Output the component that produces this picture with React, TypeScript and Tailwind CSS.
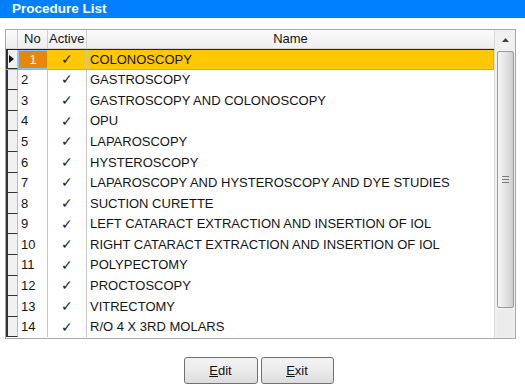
import React from "react";

const procedures = [
  "COLONOSCOPY",
  "GASTROSCOPY",
  "GASTROSCOPY AND COLONOSCOPY",
  "OPU",
  "LAPAROSCOPY",
  "HYSTEROSCOPY",
  "LAPAROSCOPY AND HYSTEROSCOPY AND DYE STUDIES",
  "SUCTION CURETTE",
  "LEFT CATARACT EXTRACTION AND INSERTION OF IOL",
  "RIGHT CATARACT EXTRACTION AND INSERTION OF IOL",
  "POLYPECTOMY",
  "PROCTOSCOPY",
  "VITRECTOMY",
  "R/O 4 X 3RD MOLARS",
];

const Row = ({ no, name, selected }: { no: number; name: string; selected: boolean }) => (
  <div
    className={
      "flex h-[20.6px] " +
      (selected ? "bg-[#ffc800] border-t border-t-[#222] border-b border-b-[#7ab8f0]" : "")
    }
  >
    <div className="w-[12px] shrink-0 bg-[#f0f0f0] border-l-2 border-l-[#333] border-b border-b-[#333] border-r border-r-[#bdbdbd] flex items-center">
      {selected && (
        <svg width="5" height="8" viewBox="0 0 5 8" className="ml-[1px]">
          <path d="M0 0 L5 4 L0 8 Z" fill="#111" />
        </svg>
      )}
    </div>
    <div
      className={
        "w-[30px] shrink-0 flex items-center border-r border-r-[#c8c8c8] " +
        (selected ? "bg-[#e6860a] text-white border border-[#8cc4f5] justify-center" : "pl-[3px]")
      }
    >
      {no}
    </div>
    <div className="w-[39px] shrink-0 flex items-center justify-center border-r border-r-[#c8c8c8] text-[14px] text-[#222]">
      ✓
    </div>
    <div className={"flex-1 flex items-center pl-[3px] " + (selected ? "border-r border-r-[#7ab8f0]" : "")}>
      {name}
    </div>
  </div>
);

export default function App() {
  return (
    <div
      className="w-[525px] h-[389px] bg-white overflow-hidden text-[13px] text-[#141414]"
      style={{ fontFamily: '"Liberation Sans", Arial, sans-serif' }}
    >
      <div className="h-[18px] bg-[#0080ff] text-white font-bold text-[13.5px] leading-[18px] pl-[12px]">
        Procedure List
      </div>

      <div className="ml-[5px] mt-[11px] w-[511px] h-[310px] border border-[#a8a8a8] flex">
        <div className="flex-1 flex flex-col">
          <div className="flex h-[19px] bg-gradient-to-b from-[#fbfbfb] to-[#eeeeee] border-b border-b-[#d5d5d5]">
            <div className="w-[12px] shrink-0 border-r border-r-[#c8c8c8]" />
            <div className="w-[30px] shrink-0 flex items-center pl-[6px] border-r border-r-[#d0d0d0]">No</div>
            <div className="w-[39px] shrink-0 flex items-center pl-[1px] border-r border-r-[#d0d0d0]">Active</div>
            <div className="flex-1 flex items-center justify-center">Name</div>
          </div>
          {procedures.map((p, i) => (
            <Row key={i} no={i + 1} name={p} selected={i === 0} />
          ))}
        </div>

        <div className="w-[21px] shrink-0 bg-[#f0f0f0] border-l border-l-[#dcdcdc] flex flex-col items-center pt-[1px]">
          <div className="h-[18px] w-[17px] flex items-center justify-center">
            <svg width="7" height="4" viewBox="0 0 7 4">
              <path d="M0 4 L3.5 0 L7 4 Z" fill="#404040" />
            </svg>
          </div>
          <div className="mt-[2px] w-[17px] h-[257px] rounded-[2px] border border-[#9a9a9a] bg-gradient-to-r from-[#f4f4f4] via-[#e4e4e4] to-[#cfcfcf] flex items-center justify-center">
            <div className="flex flex-col gap-[2px]">
              <div className="w-[7px] h-[1px] bg-[#7a7a7a]" />
              <div className="w-[7px] h-[1px] bg-[#7a7a7a]" />
              <div className="w-[7px] h-[1px] bg-[#7a7a7a]" />
            </div>
          </div>
          <div className="flex-1 w-[17px] mt-[1px] bg-[#ececec]" />
        </div>
      </div>

      <div className="flex justify-center gap-[3px] mt-[18px]">
        <button className="w-[74px] h-[27px] rounded-[3px] border border-[#707070] bg-gradient-to-b from-[#f3f3f3] via-[#ebebeb] to-[#dcdcdc] text-[13px] text-[#111] ml-[-8px]">
          <span className="underline">E</span>dit
        </button>
        <button className="w-[73px] h-[27px] rounded-[3px] border border-[#707070] bg-gradient-to-b from-[#f3f3f3] via-[#ebebeb] to-[#dcdcdc] text-[13px] text-[#111]">
          <span className="underline">E</span>xit
        </button>
      </div>
    </div>
  );
}
